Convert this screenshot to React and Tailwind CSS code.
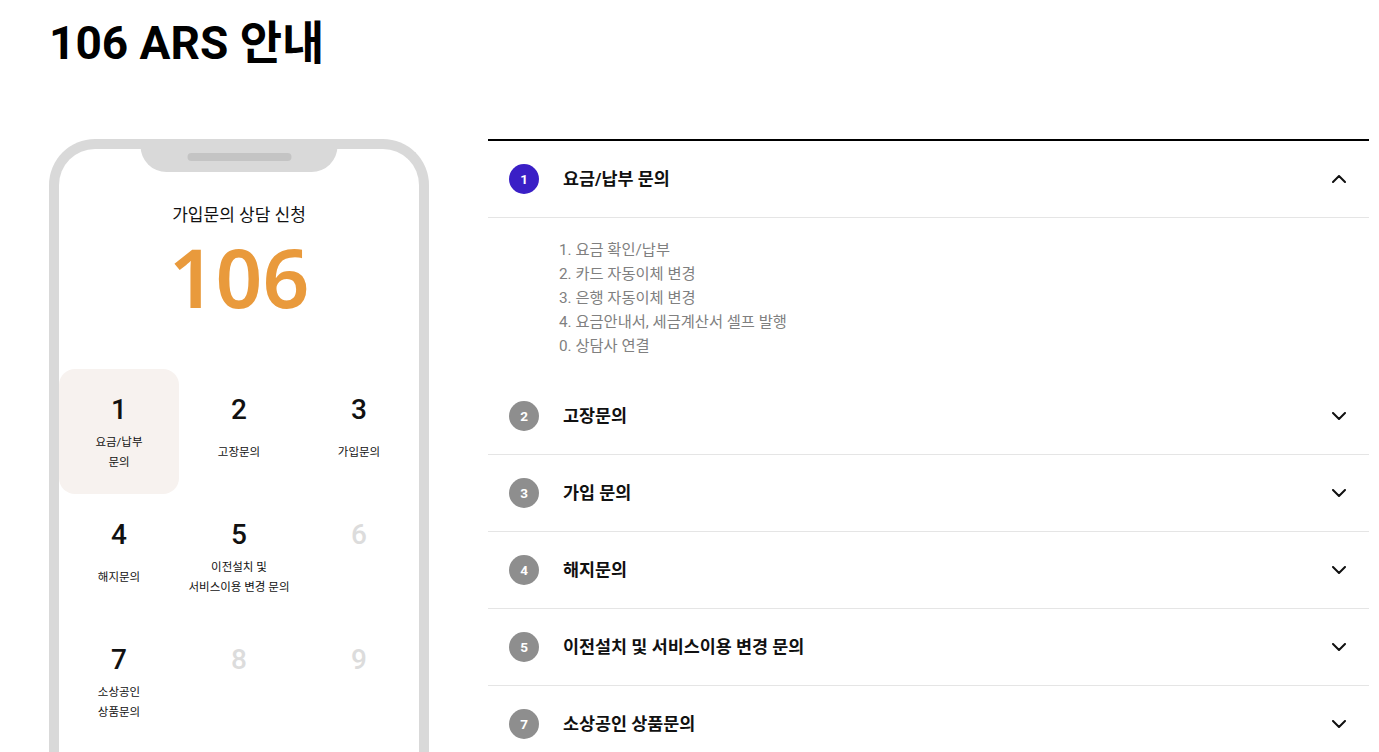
import { useState } from "react";

const keys = [
  { n: "1", label: ["요금/납부", "문의"], active: true },
  { n: "2", label: ["고장문의"] },
  { n: "3", label: ["가입문의"] },
  { n: "4", label: ["해지문의"] },
  { n: "5", label: ["이전설치 및", "서비스이용 변경 문의"] },
  { n: "6", label: [], off: true },
  { n: "7", label: ["소상공인", "상품문의"] },
  { n: "8", label: [], off: true },
  { n: "9", label: [], off: true },
];

const items = [
  {
    n: "1",
    title: "요금/납부 문의",
    lines: [
      "1. 요금 확인/납부",
      "2. 카드 자동이체 변경",
      "3. 은행 자동이체 변경",
      "4. 요금안내서, 세금계산서 셀프 발행",
      "0. 상담사 연결",
    ],
  },
  { n: "2", title: "고장문의", lines: [] },
  { n: "3", title: "가입 문의", lines: [] },
  { n: "4", title: "해지문의", lines: [] },
  { n: "5", title: "이전설치 및 서비스이용 변경 문의", lines: [] },
  { n: "7", title: "소상공인 상품문의", lines: [] },
];

const Chevron = ({ up }) => (
  <svg width="14" height="8" viewBox="0 0 14 8" fill="none" className={up ? "rotate-180" : ""}>
    <path d="M1 1l6 6 6-6" stroke="#111" strokeWidth="2" strokeLinecap="round" strokeLinejoin="round" />
  </svg>
);

const Phone = () => (
  <div className="relative w-[380px] h-[720px] shrink-0 rounded-t-[46px] border-[10px] border-b-0 border-[#d9d9d9]">
    {/* notch */}
    <div className="absolute left-1/2 -translate-x-1/2 -top-[10px] w-[197px] h-[33px] rounded-b-[26px] bg-[#d9d9d9] flex justify-center">
      <div className="mt-[14px] w-[104px] h-[8px] rounded-full bg-[#c4c4c4]" />
    </div>

    <div className="pt-[54px] text-center">
      <p className="text-[17px] leading-6 text-[#111]">가입문의 상담 신청</p>
      <p className="mt-[4px] font-['Noto_Sans',sans-serif] text-[82px] leading-[90px] font-semibold text-[#e99a3c]">106</p>
    </div>

    <div className="mt-[48px] grid grid-cols-3">
      {keys.map((k) => (
        <div
          key={k.n}
          className={`h-[125px] flex flex-col items-center pt-[27px] ${k.active ? "bg-[#f7f2ef] rounded-[16px]" : ""}`}
        >
          <span className={`text-[28px] leading-[28px] font-medium ${k.off ? "text-[#dcdcdc]" : "text-[#111]"}`}>
            {k.n}
          </span>
          <div className="h-[56px] flex flex-col items-center justify-center text-[11.5px] leading-5 text-[#111] text-center">
            {k.label.map((l) => (
              <span key={l}>{l}</span>
            ))}
          </div>
        </div>
      ))}
    </div>
  </div>
);

export default function App() {
  const [open, setOpen] = useState("1");

  return (
    <div className="min-h-screen bg-white pl-[49px] pr-[10px] font-['Roboto','Noto_Sans_CJK_KR',sans-serif]">
      <h1 className="pt-[15px] text-[46px] leading-[56px] font-bold text-black">106 ARS 안내</h1>

      <div className="mt-[68px] flex gap-[59px]">
        <Phone />

        <div className="flex-1 border-t-2 border-black">
          {items.map((it) => {
            const isOpen = open === it.n;
            return (
              <div key={it.n}>
                <button
                  onClick={() => setOpen(isOpen ? "" : it.n)}
                  className="w-full h-[77px] flex items-center pl-[21px] pr-[23px] border-b border-[#e5e5e5] text-left"
                >
                  <span
                    className={`w-[30px] h-[30px] rounded-full flex items-center justify-center text-[13.5px] font-bold text-white ${isOpen ? "bg-[#3a1fc6]" : "bg-[#8e8e8e]"}`}
                  >
                    {it.n}
                  </span>
                  <span className="ml-[24px] flex-1 text-[17.4px] font-bold text-[#111]">{it.title}</span>
                  <Chevron up={isOpen} />
                </button>
                {isOpen && it.lines.length > 0 && (
                  <ul className="pl-[71px] pt-[20px] pb-[20px] text-[15.3px] leading-6 text-[#808080]">
                    {it.lines.map((l) => (
                      <li key={l}>{l}</li>
                    ))}
                  </ul>
                )}
              </div>
            );
          })}
        </div>
      </div>
    </div>
  );
}
